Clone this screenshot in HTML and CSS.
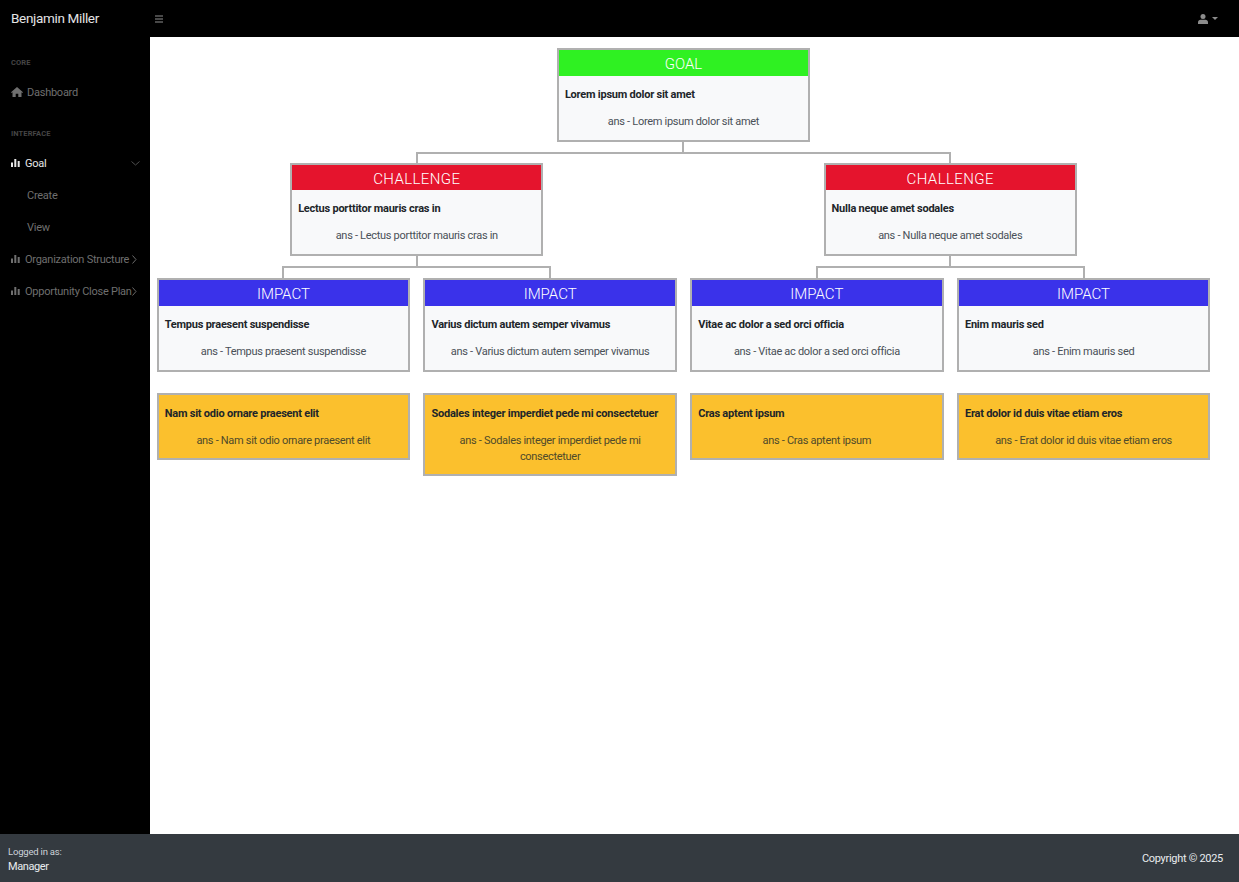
FILE: index.html
```html
<!DOCTYPE html>
<html lang="en">
<head>
  <meta charset="UTF-8" />
  <meta name="viewport" content="width=device-width, initial-scale=1" />
  <title>Goal</title>
  <link rel="stylesheet" href="styles.css">
</head>
<body>
  <header class="topbar">
    <a class="brand">Benjamin Miller</a>
    <button class="toggle" aria-label="Menu">
      <svg width="8" height="8" viewBox="0 0 8 8"><path d="M0 .5h8v1H0zM0 3.500h8v1H0zM0 6.500h8v1H0z" fill="currentColor"/></svg>
    </button>
    <div class="user-menu">
      <svg width="10" height="10" viewBox="0 0 10 10"><circle cx="5" cy="2.600" r="2.500" fill="currentColor"/><path d="M0 10V8.200C0 6.800 1.200 5.800 2.500 5.800h5C8.800 5.800 10 6.800 10 8.200V10z" fill="currentColor"/></svg>
      <span class="caret"></span>
    </div>
  </header>

  <div class="wrap">
    <nav class="sidebar">
      <div class="side-heading">CORE</div>
      <a class="side-link">
        <svg class="home-icon" width="12" height="10" viewBox="0 0 12 10"><path d="M6 0l6 5.200-.7.7L10.500 5.200V10H7.300V6.800H4.700V10H1.500V5.200L.7 5.900 0 5.200z" fill="currentColor"/></svg>
        <span class="link-text">Dashboard</span>
      </a>
      <div class="side-heading">INTERFACE</div>
      <a class="side-link active">
        <svg class="bars-icon" width="9" height="8" viewBox="0 0 9 8"><path d="M0 3.500h2V8H0zM3.300 0h2v8h-2zM6.700 2h2v6h-2z" fill="currentColor"/></svg>
        <span class="link-text">Goal</span>
        <svg class="chev chev-down" width="9" height="5" viewBox="0 0 9 5"><path d="M.5.500l4 3.500 4-3.500" fill="none" stroke="currentColor"/></svg>
      </a>
      <a class="side-link sub">Create</a>
      <a class="side-link sub">View</a>
      <a class="side-link">
        <svg class="bars-icon" width="9" height="8" viewBox="0 0 9 8"><path d="M0 3.500h2V8H0zM3.300 0h2v8h-2zM6.700 2h2v6h-2z" fill="currentColor"/></svg>
        <span class="link-text">Organization Structure</span>
        <svg class="chev" width="5" height="9" viewBox="0 0 5 9"><path d="M.5.500l3.500 4-3.500 4" fill="none" stroke="currentColor"/></svg>
      </a>
      <a class="side-link">
        <svg class="bars-icon" width="9" height="8" viewBox="0 0 9 8"><path d="M0 3.500h2V8H0zM3.300 0h2v8h-2zM6.700 2h2v6h-2z" fill="currentColor"/></svg>
        <span class="link-text">Opportunity Close Plan</span>
        <svg class="chev" width="5" height="9" viewBox="0 0 5 9"><path d="M.5.500l3.500 4-3.500 4" fill="none" stroke="currentColor"/></svg>
      </a>
    </nav>

    <main class="content">
      <div class="tree">
        <div class="card center-card">
          <div class="card-head goal">GOAL</div>
          <div class="card-body">
            <div class="card-title">Lorem ipsum dolor sit amet</div>
            <div class="card-ans">ans - Lorem ipsum dolor sit amet</div>
          </div>
        </div>
        <div class="stem stem-top"></div>
        <div class="rail rail-top"></div>

        <div class="branches">
          <div class="branch">
            <div class="card center-card">
              <div class="card-head challenge">CHALLENGE</div>
              <div class="card-body">
                <div class="card-title">Lectus porttitor mauris cras in</div>
                <div class="card-ans">ans - Lectus porttitor mauris cras in</div>
              </div>
            </div>
            <div class="stem"></div>
            <div class="rail rail-sub"></div>
            <div class="impacts">
              <div class="card">
                <div class="card-head impact">IMPACT</div>
                <div class="card-body">
                  <div class="card-title">Tempus praesent suspendisse</div>
                  <div class="card-ans">ans - Tempus praesent suspendisse</div>
                </div>
              </div>
              <div class="card">
                <div class="card-head impact">IMPACT</div>
                <div class="card-body">
                  <div class="card-title">Varius dictum autem semper vivamus</div>
                  <div class="card-ans">ans - Varius dictum autem semper vivamus</div>
                </div>
              </div>
            </div>
          </div>

          <div class="branch">
            <div class="card center-card">
              <div class="card-head challenge">CHALLENGE</div>
              <div class="card-body">
                <div class="card-title">Nulla neque amet sodales</div>
                <div class="card-ans">ans - Nulla neque amet sodales</div>
              </div>
            </div>
            <div class="stem"></div>
            <div class="rail rail-sub"></div>
            <div class="impacts">
              <div class="card">
                <div class="card-head impact">IMPACT</div>
                <div class="card-body">
                  <div class="card-title">Vitae ac dolor a sed orci officia</div>
                  <div class="card-ans">ans - Vitae ac dolor a sed orci officia</div>
                </div>
              </div>
              <div class="card">
                <div class="card-head impact">IMPACT</div>
                <div class="card-body">
                  <div class="card-title">Enim mauris sed</div>
                  <div class="card-ans">ans - Enim mauris sed</div>
                </div>
              </div>
            </div>
          </div>
        </div>

        <div class="actions">
          <div class="card action">
            <div class="card-body">
              <div class="card-title">Nam sit odio ornare praesent elit</div>
              <div class="card-ans">ans - Nam sit odio ornare praesent elit</div>
            </div>
          </div>
          <div class="card action">
            <div class="card-body">
              <div class="card-title">Sodales integer imperdiet pede mi consectetuer</div>
              <div class="card-ans">ans - Sodales integer imperdiet pede mi consectetuer</div>
            </div>
          </div>
          <div class="card action">
            <div class="card-body">
              <div class="card-title">Cras aptent ipsum</div>
              <div class="card-ans">ans - Cras aptent ipsum</div>
            </div>
          </div>
          <div class="card action">
            <div class="card-body">
              <div class="card-title">Erat dolor id duis vitae etiam eros</div>
              <div class="card-ans">ans - Erat dolor id duis vitae etiam eros</div>
            </div>
          </div>
        </div>
      </div>
    </main>
  </div>

  <footer class="footer">
    <div class="logged">
      <div class="logged-label">Logged in as:</div>
      <div class="logged-role">Manager</div>
    </div>
    <div class="copyright">Copyright © 2025</div>
  </footer>
</body>
</html>
```

FILE: styles.css
```css
* {
  box-sizing: border-box;
}

body {
  font-family: Roboto, "Liberation Sans", sans-serif;
  margin: 0;
  height: 100vh;
  display: flex;
  flex-direction: column;
  overflow: hidden;
  background: #fff;
  color: #212529;
}

/* top bar */
.topbar {
  height: 37px;
  flex: none;
  background: #000;
  display: flex;
  align-items: center;
}

.brand {
  width: 150px;
  padding: 0 0 2px 11px;
  color: #e4e4e4;
  font-size: 13.5px;
  letter-spacing: -0.33px;
}

.toggle {
  background: none;
  border: none;
  padding: 0 0 0 5px;
  color: #8f8f8f;
  display: flex;
}

.user-menu {
  margin-left: auto;
  margin-right: 21px;
  display: flex;
  align-items: center;
  gap: 4px;
  color: #8c8c8c;
}

.caret {
  width: 0;
  height: 0;
  border-left: 3px solid transparent;
  border-right: 3px solid transparent;
  border-top: 3px solid currentColor;
}

.wrap {
  flex: 1;
  display: flex;
  min-height: 0;
}

/* sidebar */
.sidebar {
  width: 150px;
  flex: none;
  background: #000;
}

.side-heading {
  height: 39px;
  padding: 21px 0 0 11px;
  font-size: 7.5px;
  line-height: 10px;
  font-weight: 700;
  letter-spacing: 0.1px;
  color: #454545;
}

.side-link {
  height: 32px;
  display: flex;
  align-items: center;
  padding: 0 13px 0 11px;
  font-size: 11px;
  letter-spacing: -0.25px;
  color: #6f6f6f;
}

.side-link svg {
  flex: none;
}

.side-link.active {
  color: #e8e8e8;
}

.side-link.sub {
  padding-left: 27px;
}

.home-icon {
  margin-right: 4px;
}

.bars-icon {
  margin-right: 5px;
}

.link-text {
  white-space: nowrap;
}

.chev {
  margin-left: auto;
  color: #6a6a6a;
}

.chev-down {
  margin-right: -3px;
  color: #4e4e4e;
}

/* tree */
.content {
  flex: 1;
  padding: 11px 0 0 6.75px;
}

.tree {
  width: 1053.5px;
}

.card {
  border: 2px solid #b0b0b0;
  background: #f8f9fa;
}

.center-card {
  width: 253.25px;
  margin: 0 auto;
}

.card-head {
  height: 25.5px;
  padding-top: 3px;
  line-height: 22.5px;
  text-align: center;
  font-size: 15px;
  font-weight: 300;
  color: #fff;
}

.goal {
  background: #2ff122;
}

.challenge {
  background: #e5142d;
  letter-spacing: 0.4px;
}

.impact {
  background: #3a32ea;
}

.card-body {
  padding: 12px 6px 10px;
}

.card-title {
  font-size: 11px;
  font-weight: 700;
  line-height: 14px;
  letter-spacing: -0.23px;
  margin-bottom: 12px;
}

.card-ans {
  font-size: 11px;
  line-height: 16px;
  letter-spacing: -0.3px;
  text-align: center;
  color: #495057;
}

.stem {
  width: 2px;
  height: 10px;
  margin: 0 auto;
  background: #b0b0b0;
}

.stem-top {
  margin-left: calc(50% - 1.5px);
}

.rail {
  border: 2px solid #b0b0b0;
  border-bottom: none;
}

.rail-top {
  height: 11.25px;
  margin: 0 259px;
}

.rail-sub {
  height: 11.75px;
  margin: 0 125.5px;
}

.branches {
  display: grid;
  grid-template-columns: 1fr 1fr;
  gap: 13.42px;
}

.impacts {
  display: grid;
  grid-template-columns: 1fr 1fr;
  gap: 13.42px;
  align-items: start;
}

.actions {
  display: grid;
  grid-template-columns: repeat(4, 1fr);
  gap: 13.42px;
  margin-top: 21.5px;
  align-items: start;
}

.action {
  background: #fbc02d;
}

.action .card-body {
  padding-bottom: 9px;
}

.action .card-ans {
  color: #4f4a2a;
}

/* footer */
.footer {
  height: 48px;
  flex: none;
  background: #343a40;
  color: #e9ecef;
  display: flex;
  justify-content: space-between;
  align-items: center;
  padding: 0 16px 0 8px;
}

.logged {
  padding-top: 3px;
}

.logged-label {
  font-size: 9.5px;
  line-height: 14px;
  letter-spacing: -0.2px;
  color: #ced4da;
}

.logged-role {
  font-size: 11px;
  line-height: 16px;
  letter-spacing: -0.4px;
}

.copyright {
  font-size: 11px;
  letter-spacing: -0.3px;
}
```
